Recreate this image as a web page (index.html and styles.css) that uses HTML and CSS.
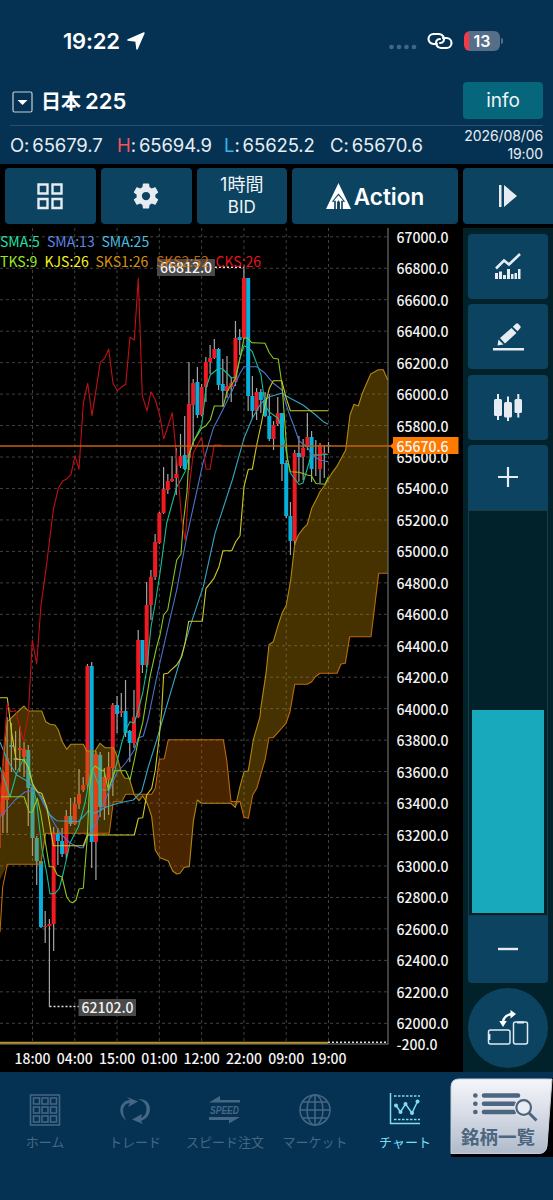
FILE: index.html
```html
<!DOCTYPE html>
<html lang="ja">
<head>
    <meta charset="UTF-8">
    <meta name="viewport" content="width=device-width, initial-scale=1.0">
    <title>日本225</title>
    <link rel="stylesheet" href="styles.css">
</head>
<body>
    <header>
        <div class="status">
            <div class="clock">19:22
                <svg width="18" height="18" viewBox="0 0 18 18"><path d="M17 1 10 17 9 9 1 8z" fill="#fff" stroke="#fff" stroke-width="1.5" stroke-linejoin="round"/></svg>
            </div>
            <div class="signals">
                <svg width="28" height="6" viewBox="0 0 28 6" fill="#44658a"><circle cx="2.5" cy="3" r="2.3"/><circle cx="10" cy="3" r="2.3"/><circle cx="17.500" cy="3" r="2.3"/><circle cx="25" cy="3" r="2.3"/></svg>
                <svg class="link" width="26" height="18" viewBox="0 0 26 18" fill="none" stroke="#fff" stroke-width="2.1" stroke-linecap="round"><path d="M10 12H6.500a5 5 0 0 1 0-10H12a5 5 0 0 1 4.500 7.200q-1 1.800-3.500 1.800"/><path d="M16 6h3.500a5 5 0 0 1 0 10H14a5 5 0 0 1-4.500-7.200q1-1.800 3.500-1.800"/></svg>
                <div class="battery">13</div>
            </div>
        </div>
        <div class="symbol">
            <svg width="21" height="22" viewBox="0 0 21 22"><rect x="1" y="1" width="19" height="20" rx="1.500" fill="none" stroke="#c3d0dc" stroke-width="1.200"/><path d="M5.500 9h10l-5 5z" fill="#fff"/></svg>
            <h1>日本<b>225</b></h1>
            <button class="info">info</button>
        </div>
        <div class="prices">
            <span class="o">O:<i>65679.7</i></span>
            <span class="h"><em>H</em>:<i>65694.9</i></span>
            <span class="l"><em>L</em>:<i>65625.2</i></span>
            <span class="c">C:<i>65670.6</i></span>
            <time>2026/08/06<br>19:00</time>
        </div>
    </header>

    <nav class="toolbar">
        <button>
            <svg width="26" height="27" viewBox="0 0 26 27" fill="none" stroke="#e6ecf2" stroke-width="2.400"><path d="M1.500 1.500h9v9h-9zM15.500 1.500h9v9h-9zM1.500 16h9v9h-9zM15.500 16h9v9h-9z"/></svg>
        </button>
        <button>
            <svg width="30" height="30" viewBox="0 0 24 24" fill="#e6ecf2"><path d="M19.430 12.980c.04-.32.07-.64.07-.98s-.03-.66-.07-.98l2.110-1.650c.19-.15.24-.42.12-.64l-2-3.460c-.12-.22-.39-.3-.61-.22l-2.490 1c-.52-.4-1.080-.73-1.690-.98l-.38-2.650C14.460 2.180 14.250 2 14 2h-4c-.25 0-.46.18-.49.42l-.38 2.650c-.61.25-1.170.59-1.690.98l-2.490-1c-.23-.09-.49 0-.61.22l-2 3.460c-.13.22-.07.49.12.64l2.110 1.650c-.04.32-.07.65-.07.98s.03.66.07.98l-2.110 1.650c-.19.15-.24.42-.12.64l2 3.460c.12.22.39.3.61.22l2.490-1c.52.4 1.080.73 1.690.98l.38 2.650c.03.24.24.42.49.42h4c.25 0 .46-.18.49-.42l.38-2.650c.61-.25 1.170-.59 1.690-.98l2.490 1c.23.09.49 0 .61-.22l2-3.460c.12-.22.07-.49-.12-.64zM12 15.300a3.300 3.300 0 1 1 0-6.600 3.300 3.300 0 0 1 0 6.600z"/></svg>
        </button>
        <button class="period"><span>1時間</span><span>BID</span></button>
        <button class="action">
            <svg width="25" height="26" viewBox="0 0 26 27"><path d="M13 0 26 27H17.500V19.500H20L13 11 6 19.500H8.500V27H0z" fill="#fff"/><path d="M13 12.800 18 18.500H15.800V27H14.500V20L13 18 11.500 20V27H10.200V18.500H8z" fill="#fff"/></svg>
            Action
        </button>
        <button class="play">
            <svg width="18" height="22" viewBox="0 0 18 22" fill="#e6ecf2"><path d="M0 0h2.500v22H0zM5 0l13 11L5 22z"/></svg>
        </button>
    </nav>

    <main>
        <svg class="chart" id="chart" width="463" height="844" viewBox="0 228 463 844">
            <g id="grid" class="grid"></g>
            <path class="axis" d="M388 228V1044H0"/>
            <path class="wick dots" d="M215 267.200h29M49.500 1006.500h30"/>
            <g class="tag"><rect x="157" y="259" width="58" height="17"/><text x="160" y="273">66812.0</text></g>
            <g class="tag"><rect x="78.500" y="999" width="57.500" height="17"/><text x="81.500" y="1013">62102.0</text></g>
            <g id="candles"></g>

            <!-- cloud -->
            <path class="kumo-up" d="M0 880 0 800 3.300 760 7.300 721.700 24 706 28.300 711H41.700L45.700 721.700 50 724.300 55 725 58.300 730 62.300 741.700 66.700 749.300 70.700 744.300H83.300L86.700 751H95L100 743.300 105 747.700H113.300L116.700 755 121.700 773.300 125 778.300H129.300L134.300 794.300H125.700L121.700 801.700H113.300L109.300 833.300H45.700L40.700 864.300H7.300z"/>
            <path class="kumo-up" d="M237 804 240 786.700 244 771.700 248.300 770.700 253.300 740 260 716.700 261 706.700 266 673.300 269 644.700 273.300 641.700 277.700 626.700 282 613.300 286.300 605 290.700 580 294.700 544.300 298.300 535 303.300 528.300 307.300 524.300 311.700 508.300 316 500 320 491.700 325 485 331.700 473.300 336.700 466.700 345.700 450 350 415 354 404.300 358.300 406 362.300 393.300 370.700 374 378.300 369.700H383.300L387.700 380V573.300H378.700L371 636.700H349.700L345.300 663.300 341 664 337 673.300H320L315.300 676.700 311.700 681.700 307.300 684.300H294.700L290 711.700 286 723.300 273.300 737.700H269L265 760 256.700 788.300 252.700 795 248.300 818.300 244 817.300 240 801.700z"/>
            <path class="kumo-down" d="M134.300 794.300H151.700L155.300 788.300 159.300 759.300 164.300 758.700 168.300 739.700H223.300L226.700 760 231 801.500H240L235.300 807.300 231 803.300H201.700L197.300 800 193.300 821.700 189.300 866.700 184.300 867.300 180 873.300 176.700 874 172.700 871 168.300 861 160 857.700 155.300 850 151.700 816.700 147.300 803.300 142.700 796 139 800.700z"/>
            <path class="sks1" d="M0 800 3.300 760 7.300 721.700 24 706 28.300 711H41.700L45.700 721.700 50 724.300 55 725 58.300 730 62.300 741.700 66.700 749.300 70.700 744.300H83.300L86.700 751H95L100 743.300 105 747.700H113.300L116.700 755 121.700 773.300 125 778.300H129.300L134.300 795 139 800.700 142.700 796 147.300 803.300 151.700 816.700 155.300 850 160 857.700 168.300 861 172.700 871 176.700 874 180 873.300 184.300 867.300 189.300 866.700 193.300 821.700 197.300 800 201.700 803.300H231L235.300 807.300 240 786.700 244 771.700 248.300 770.700 253.300 740 260 716.700 261 706.700 266 673.300 269 644.700 273.300 641.700 277.700 626.700 282 613.300 286.300 605 290.700 580 294.700 544.300 298.300 535 303.300 528.300 307.300 524.300 311.700 508.300 316 500 320 491.700 325 485 331.700 473.300 336.700 466.700 345.700 450 350 415 354 404.300 358.300 406 362.300 393.300 370.700 374 378.300 369.700H383.300L387.700 380"/>
            <path class="sks2" d="M0 932 2.700 887 7.300 864.300H40.700L45.700 833.300H109.300L113.300 801.700H121.700L125.700 794.300H151.700L155.300 788.300 159.300 759.300 164.300 758.700 168.300 739.700H223.300L226.700 760 231 801.500H240L244 817.300 248.300 818.300 252.700 795 256.700 788.300 265 760 269 737.700H273.300L286 723.300 290 711.700 294.700 684.300H307.300L311.700 681.700 315.300 676.700 320 673.300H337L341 664 345.300 663.300 349.700 636.700H371L378.700 573.300H387.700"/>

            <!-- moving averages -->
            <path class="sma5" d="M0 767 10 797 16.700 773 24 758 28.300 763 36.700 803 41.700 847 46.700 873 50 894 55 893.300 59.300 888.300 63.300 873 70 843 78.300 827 85 803 91.700 767 96.700 780 101.700 790H108.300L115 770 121.700 743 125.700 730 130 721.700 134.300 723 138.300 710 142.700 693 146.700 670 151 627 155.300 603 160 573 166.700 523 176.700 487 180.700 480 185 471.700 189 455 193.300 442 201.700 425 206 388 210.300 375 218.700 368 222.700 369 231.700 378 235.700 377 240 358 244 345.700 248.300 347.700 252.300 351.700 261 375 265 405 269.300 412 277.700 418 282 428 286.300 452 290.300 473 299 484.500 303 483 311.300 455H320L328.300 454.300"/>
            <path class="sma13" d="M0 817 15 800 25 792 36.700 790 48.300 813 60 833 70 843 80 847.700H83.300L87.300 837 96.700 823 101.700 808 116.700 773 125.700 763 134.300 750 138.300 738 143.300 736 148.300 718 156.700 677 166.700 633 176.700 590 186.700 537 203.300 461.700 213.300 428.300 222.700 410 231.700 391.700 240 373.300 244 366.700H256.700L265 373.300 273.300 383.300 282 390 286.300 405 290.300 416.700 294.700 428.300 299 441 307.300 446.700 311.700 455 320 460 328.300 461.700"/>
            <path class="sma25" d="M0 742 7.300 760 16.700 775 28.300 781.700 41.700 797 50 815 56.700 820.700 78.300 821.700 85 815 88.300 810.700 95 813.300 106.700 806.700 120 802.700 133.300 800 141.700 791.700 148.300 767 156.700 740 190 626.700 203.300 586.700 215 533.300 232.300 480 244 438.300 252.300 418.300 261 403.300 269.300 396.700 281.700 393.300 290.300 398.300 303 405 315.700 415 323.300 421.700 328.300 424.300"/>
            <path class="tks" d="M0 796.700H24L29.300 812.300H32.300L37.300 798.300 40.700 813 49.300 866.700H53.300L57.300 875 62 877 66.700 896.700 70 901.700 72.700 902.700 76 900 79 889 83.300 888.300 87.300 837 89.300 790 92 770 95 766 101.700 770.700 104 770 108.300 790 115 770.700H125.700L130 780 135 757 138.300 740 142.700 722.700 150 676.700 156.700 646.700 160 635 163.700 615 167.700 610 176.700 560 181 554 183.300 523 187 492 189 455 193.300 441.700 201.700 428.300 206 425.700 210.300 420 214.300 406H223.300L227 391.700 235.700 378.300 240 358 244 338.300 246.700 337.700 251.700 342.700 265 343.300 269.300 352.700 273.300 358.300 278.300 359 282 385 285 425 287.300 458.300 290.300 471.700 299 472.300 307.300 475 311.300 475.700 316 483.500 325 484.300 328.300 477"/>
            <path class="kjs" d="M0 697.700H7.300L11.700 733.300 16 759 24 760 28.300 767.300 32.300 783.300 37.300 791.700 41.700 793.300 46.700 806.700 53.300 845.700H83.300L87.300 835H134.300L138.300 818.300 142.700 817.700 146.700 795 151.700 788.300 155.300 770 159.300 736 161.700 710 163.700 674 167.700 673.300 171.700 669.300 176.700 665 181.700 656.700 185 643.300 188.700 621.300H202.300L206 588.300 214 578.300 219 566.700 223 550.700H231.700L235.700 541.700 240 535.700 244 486.700 248.300 469.300H252.300L256.700 445 261 425 265 405 269.300 388.300 273.300 380.700H281.700L286.300 398.300 290.300 410.700H328.300"/>
            <path class="cks" d="M0 803 4 745 7.300 704 11 711.700 15.700 710.700 23.300 741 28.300 715 32.300 640 36.700 664 41 605 45.700 571.700 53.300 510 58.300 488.300 62.700 481 66.700 479 71 474.300 75 455.700 79 469.300 83.300 403.300 87.700 383.300 92 415.700 100.300 362.300 104.700 358.300 108.700 349 113 383.300 117.300 390.700 121.300 387.300 125.700 384.300 130 337.300 134.300 340 138.300 278.300 142.300 395.700 147 411 151 391.700 155.300 400 159.700 415 163.700 439 172.300 412.700 176.700 458.300 181.700 520 185.300 540.700 188 498 193.300 453 201.700 437.300 206 469.300H210L214.300 445H221.700"/>

            <path class="now" d="M0 446H393"/>
            <path class="sub" d="M0 1042.800H328"/>
            <path class="dots" d="M328 1042.300H388"/>

            <g class="legend">
                <text x="0" y="246.500" fill="#1fe0a4">SMA:5</text>
                <text x="47" y="246.500" fill="#5a86e6">SMA:13</text>
                <text x="101.500" y="246.500" fill="#45bfe0">SMA:25</text>
                <text x="0" y="266.500" fill="#9be822">TKS:9</text>
                <text x="44.500" y="266.500" fill="#f7f419">KJS:26</text>
                <text x="95.500" y="266.500" fill="#d9920f">SKS1:26</text>
                <text x="156" y="266.500" fill="#e07a0c" opacity=".85">SKS2:52</text>
                <text x="215.500" y="266.500" fill="#e8151b">CKS:26</text>
            </g>
            <g id="levels" class="label"></g>
            <text class="label" x="396.500" y="1049.500">-200.0</text>
            <g id="hours" class="label hours"></g>
            <path d="M390 446l3-3v-6h65.500v17H393v-5z" fill="#ff7b00"/>
            <text class="label" x="396.500" y="451.500">65670.6</text>
        </svg>

        <aside>
            <button>
                <svg width="28" height="27" viewBox="0 0 28 27" fill="#e6ecf2"><path d="M2 15.500 10 7.500l5 4L26 1" fill="none" stroke="#e6ecf2" stroke-width="2.600"/><path d="M1 20h3v6H1zM5 18.500h3V26H5zM9 22h3v4H9zM13 16h3v10h-3zM17 21h2.500v5H17zM20.500 20h2.500v6h-2.500zM24 16h2.500v10H24z"/></svg>
            </button>
            <button>
                <svg width="31" height="28" viewBox="0 0 31 28" fill="#e6ecf2"><path d="M0 25h31v2.600H0zM4.500 22.500l1-6 5 5zM7 15 18.500 5l5 5L12 20.500zM19.800 3.800 23 .8q1-1 2.200 0l2 2.200q1 1 0 2.200L24.500 8.200z"/></svg>
            </button>
            <button>
                <svg width="28" height="27" viewBox="0 0 28 27" fill="#e6ecf2"><rect y="5" width="8" height="17" rx="1.500"/><rect x="10" y="8" width="8" height="15.500" rx="1.500"/><rect x="20.500" y="5" width="7.500" height="14" rx="1.500"/><path d="M3 0h2v26H3zM13 2.500h2V27h-2zM23.300 0h2v23.500h-2z"/></svg>
            </button>
            <div class="zoomer">
                <button><svg width="20" height="20" viewBox="0 0 20 20"><path d="M0 10h20M10 0v20" stroke="#e6ecf2" stroke-width="2.200"/></svg></button>
                <div class="track"><div class="thumb"></div></div>
                <button><svg width="20" height="20" viewBox="0 0 20 20"><path d="M0 10h20" stroke="#e6ecf2" stroke-width="2.400"/></svg></button>
            </div>
            <button class="rotate">
                <svg width="42" height="36" viewBox="0 0 42 36" fill="none" stroke="#dfeaf2" stroke-width="1.500"><rect x="1.500" y="20" width="21.500" height="14" rx="2"/><rect x="26.500" y="12" width="14" height="22" rx="2"/><path d="M30 12.500h7M2.300 24v6" stroke-width="2.200"/><path d="M16 12q1-7 9-8" stroke="#fff" stroke-width="2.400"/><path d="M23.500 0l5.500 4-5.500 4.500zM12.300 11h7.500L16 17z" fill="#fff" stroke="none"/></svg>
            </button>
        </aside>
    </main>

    <footer>
        <a>
            <svg width="32" height="34" viewBox="0 0 32 34" fill="none" stroke="#466784" stroke-width="1.500"><path d="M1.500 2h29v30h-29z"/><path d="M4.500 5h6v6h-6zM13 5h6v6h-6zM21.500 5h6v6h-6zM4.500 14h6v6h-6zM13 14h6v6h-6zM21.500 14h6v6h-6zM4.500 23h6v6h-6zM13 23h6v6h-6zM21.500 23h6v6h-6z"/></svg>
            ホーム
        </a>
        <a>
            <svg width="32" height="34" viewBox="0 0 32 34" fill="#466784"><path d="M8 28Q-1 22 2 13 5 7 11 7L8 4l11 4.500L9 14l2-4Q5 10 4 17q0 7 4 11zM19 6q12 0 12 11-1 8-9 11l2 3-11-4.500L23 21l-1 4q5-2 5.500-8Q28 9 19 6z"/></svg>
            トレード
        </a>
        <a>
            <svg width="32" height="34" viewBox="0 0 32 34" fill="#466784"><path d="M0 9.500 11 3v4h20v2.500zM31 24 20 30.500V27H0v-3z"/><text x="1" y="20.500" textLength="29" lengthAdjust="spacingAndGlyphs" class="speed">SPEED</text></svg>
            スピード注文
        </a>
        <a>
            <svg width="32" height="34" viewBox="0 0 32 34" fill="none" stroke="#466784" stroke-width="1.500"><circle cx="16" cy="17" r="15"/><ellipse cx="16" cy="17" rx="8" ry="15"/><path d="M16 2v30M1 17h30M4 9h24M4 25h24"/></svg>
            マーケット
        </a>
        <a class="active">
            <svg width="32" height="34" viewBox="0 0 32 34" fill="none" stroke="#7edcf3" stroke-width="1.500"><path d="M1.500 0v30.500H31"/><path d="M5 3h26M5 26.500h26" stroke-dasharray="2.500 1.500"/><path d="M7 12.500 11.500 19l5-8 6.500 9L28.500 8.500"/><g fill="#7edcf3" stroke="none"><circle cx="7" cy="12.500" r="2"/><circle cx="11.500" cy="19" r="2"/><circle cx="16.500" cy="11" r="2"/><circle cx="23" cy="20" r="2"/><circle cx="28.500" cy="8.500" r="2"/></g></svg>
            チャート
        </a>
        <div class="list-wrap">
            <svg class="shape" width="103" height="79" viewBox="0 0 103 79">
                <defs><linearGradient id="silver" x2="0" y2="1"><stop offset="0" stop-color="#f5f6fa"/><stop offset=".5" stop-color="#d5dae4"/><stop offset="1" stop-color="#aebaca"/></linearGradient></defs>
                <path d="M98 0h5v79H1V70z" fill="#000"/>
                <path d="M1 75.500V9q0-8 8-8H102L97 68q-1 7.500-8 7.500z" fill="url(#silver)" stroke="#c5cfdb" stroke-width="1"/>
                <g stroke="#4c6680" stroke-width="4.600" stroke-linecap="round" fill="none"><path d="M34 17.500H68M34 25.700H64M34 34H64"/><path d="M25.300 17.500h.1M25.300 25.700h.1M25.300 34h.1"/></g>
                <circle cx="73.700" cy="29.500" r="9.500" fill="#e2e6ee"/><circle cx="73.700" cy="29.500" r="7.300" fill="#e9ecf2" stroke="#4c6680" stroke-width="2.200"/><path d="M79 35l7.500 7.500" stroke="#4c6680" stroke-width="3"/>
            </svg>
            <span>銘柄一覧</span>
        </div>
    </footer>
    <script src="script.js"></script>
</body>
</html>
```
FILE: styles.css
```css
*{
    margin: 0;
    padding: 0;
    box-sizing: border-box;
}
body{
    width: 553px;
    height: 1200px;
    display: flex;
    flex-direction: column;
    background-color: #053253;
    color: #fff;
    font-family: Inter, "Noto Sans CJK JP", sans-serif;
    overflow: hidden;
}
button{
    border: none;
    color: #eef3f7;
    font-family: inherit;
    background-color: #0b4361;
    border-radius: 4px;
    display: flex;
    align-items: center;
    justify-content: center;
}
header{
    height: 164px;
    padding: 0 10px;
}
.status{
    height: 82px;
    padding: 0 39px 0 53px;
    display: flex;
    align-items: center;
    justify-content: space-between;
}
.clock{
    display: flex;
    align-items: center;
    gap: 7px;
    font-size: 22px;
    font-weight: 600;
    letter-spacing: -0.2px;
}
.signals{
    display: flex;
    align-items: center;
    gap: 10px;
}
.signals svg:first-child{
    margin-top: 11px;
}
.signals .link{
    margin-right: 1px;
}
.battery{
    position: relative;
    width: 36px;
    height: 20px;
    margin-right: 4px;
    border-radius: 6px;
    font-size: 16px;
    font-weight: 600;
    line-height: 20px;
    text-align: center;
    background: linear-gradient(90deg, #f33b47 5px, #566f88 5px);
}
.battery::after{
    content: "";
    position: absolute;
    right: -3px;
    top: 7px;
    width: 2px;
    height: 6px;
    border-radius: 0 2px 2px 0;
    background-color: #566f88;
}
.symbol{
    height: 44px;
    display: flex;
    align-items: center;
    gap: 8px;
    padding: 0 0 6px 2px;
    border-bottom: 1px solid #2a4f6e;
}
.symbol svg{
    margin-top: 2px;
}
h1{
    font-size: 20px;
    font-weight: 700;
    line-height: 30px;
    margin-top: 2px;
}
h1 b{
    margin-left: 4px;
    font-size: 22px;
    font-weight: 600;
}
.info{
    width: 80px;
    height: 37px;
    margin-left: auto;
    background-color: #05667c;
    font-size: 19px;
}
.prices{
    display: grid;
    grid-template-columns: 107px 107px 106px 110px 1fr;
    align-items: center;
    height: 38px;
    font-size: 18.500px;
    font-weight: 400;
    letter-spacing: -0.1px;
    color: #e8eef4;
}
.prices i{
    font-style: normal;
    margin-left: 3px;
}
.prices em{
    font-style: normal;
    color: #f2545b;
}
.prices .l em{
    color: #35b6e6;
}
time{
    text-align: right;
    font-size: 14px;
    line-height: 18px;
    white-space: nowrap;
    justify-self: end;
}
.toolbar{
    height: 64px;
    display: grid;
    grid-template-columns: 90.500px 91px 90.500px 166px 90px;
    gap: 5px;
    padding: 4px 0 4px 5px;
    background-color: #000;
}
.toolbar .period{
    flex-direction: column;
    font-size: 17px;
    line-height: 22px;
}
.period span:first-child{
    font-size: 18px;
}
.toolbar .action{
    font-size: 22.500px;
    font-weight: 600;
    color: #fff;
    gap: 3px;
}
.toolbar .play{
    border-radius: 4px 0 0 4px;
}
main{
    display: flex;
    height: 844px;
    background-color: #000;
}
.chart{
    display: block;
    font-family: "Noto Sans CJK JP", sans-serif;
    font-size: 14px;
    font-weight: 500;
}
.chart path{
    fill: none;
}
.chart path[fill]{
    fill: #ff7b00;
}
.grid line{
    stroke: #414141;
    stroke-dasharray: 3 3;
}
.chart .axis{
    stroke: #555;
    stroke-width: 1.5;
}
.wick{
    stroke: #a6a6a6;
    stroke-width: 1.2;
}
.chart .dots{
    stroke: #ddd;
    stroke-width: 1.5;
    stroke-dasharray: 2 2;
}
.up{
    fill: #f01a22;
}
.down{
    fill: #05b0dc;
}
.tag rect{
    fill: #4a4a4a;
}
.tag text, .label{
    fill: #f4f4f4;
}
.legend{
    font-weight: 400;
}
.hours{
    text-anchor: middle;
}
.chart .kumo-up{
    fill: rgba(200, 140, 0, .35);
}
.chart .kumo-down{
    fill: rgba(205, 103, 0, .35);
}
.sks1, .sks2, .sma5, .sma13, .sma25, .tks, .kjs, .cks{
    stroke-width: 1.1;
    stroke-linejoin: round;
}
.sks1{ stroke: #b08a10; }
.sks2{ stroke: #bd6a0c; }
.sma5{ stroke: #18bd92; }
.sma13{ stroke: #4b74cf; }
.sma25{ stroke: #35a6c2; }
.tks{ stroke: #8ac820; }
.kjs{ stroke: #cfcb22; }
.cks{ stroke: #c21017; }
.now{
    stroke: #c4620c;
    stroke-width: 1.5;
}
.sub{
    stroke: #b5922a;
    stroke-width: 2;
}
aside{
    flex: 1;
    display: flex;
    flex-direction: column;
    gap: 5.3px;
    padding: 6px 5px 0;
    background-color: #02222b;
}
aside button{
    width: 80px;
    height: 65px;
    flex: none;
}
.zoomer{
    height: 538px;
    display: flex;
    flex-direction: column;
}
.zoomer button:first-child{
    border-radius: 4px 4px 0 0;
}
.zoomer button:last-child{
    height: 67px;
    border-radius: 0 0 4px 4px;
}
.track{
    flex: 1;
    display: flex;
    align-items: flex-end;
    padding: 0 3px 2px;
    border: 1px solid #1c3a42;
}
.thumb{
    width: 100%;
    height: 203px;
    background-color: #19a9bd;
}
aside .rotate{
    height: 80px;
    border-radius: 50%;
}
footer{
    flex: 1;
    display: grid;
    grid-template-columns: repeat(5, 90px) 103px;
    align-items: start;
    padding-top: 6px;
}
footer a{
    display: flex;
    flex-direction: column;
    align-items: center;
    gap: 5px;
    padding-top: 15px;
    font-size: 13px;
    line-height: 20px;
    color: #466784;
    white-space: nowrap;
}
footer .active{
    color: #7edcf3;
}
.speed{
    font-family: "Liberation Sans", sans-serif;
    font-size: 10px;
    font-weight: 700;
    font-style: italic;
}
.list-wrap{
    display: grid;
}
.list-wrap > *{
    grid-area: 1 / 1;
}
.list-wrap span{
    align-self: end;
    padding: 0 0 7px 11px;
    font-size: 18.500px;
    font-weight: 700;
    line-height: 25px;
    color: #4c6680;
}
```
FILE: script.js
```js
// wick top, body top, body bottom, wick bottom, 1 = up / 0 = down
let candles = [
    [790,800,848,850,1],[770,772,815,833,1],[717,758,800,833,1],[723,745,747,772,0],[731,758,760,770,0],[726,748,750,772,1],
    [742,749,757,777,1],[745,750,788,826,0],[785,787,838,856,0],[836,838,861,885,0],[861,861,927,928,0],[911,926,927,943,1],
    [919,924,926,1007,1],[827,833,924,951,1],[828,833,841,865,0],[828,841,854,857,0],[810,816,854,859,1],[798,816,824,826,0],
    [797,804,824,825,1],[769,794,804,809,1],[777,785,790,792,1],[664,666,785,789,1],[662,666,842,868,0],[751,754,842,880,1],
    [752,755,807,817,0],[768,777,807,820,1],[752,767,780,815,1],[703,705,768,796,1],[696,705,714,733,0],[693,711,713,717,1],
    [680,711,733,737,0],[730,731,743,762,0],[690,717,743,748,1],[630,640,717,718,1],[640,640,665,673,0],[582,605,665,667,1],
    [570,577,605,620,1],[534,542,577,580,1],[512,513,543,544,1],[467,489,513,514,1],[474,481,490,494,1],[456,479,481,482,1],
    [448,474,478,495,1],[434,456,466,468,1],[416,455,469,470,0],[362,404,458,470,1],[379,383,405,446,1],[367,382,415,418,0],
    [384,387,415,416,1],[357,362,387,402,1],[345,358,362,374,1],[339,349,358,359,1],[348,349,385,390,0],[359,384,391,407,0],
    [356,386,391,398,1],[377,383,387,402,1],[321,338,382,386,1],[329,337,340,355,0],[267,278,338,339,1],[278,278,396,411,0],
    [376,396,411,418,0],[388,392,411,420,1],[389,392,400,413,0],[392,400,416,417,0],[394,416,439,441,0],[421,425,439,450,1],
    [397,413,424,426,1],[413,413,464,481,0],[460,463,516,518,0],[502,516,541,555,0],[450,453,541,545,1],[436,453,457,482,0],
    [439,448,457,480,1],[413,437,447,450,1],[431,437,469,482,0],[440,454,456,476,1],[443,445,469,483,1],[445,453,454,478,1],
    [442,445,446,453,0]
]
let step = 4.2286

function add(parent, tag, attrs, text){
    let el = document.createElementNS("http://www.w3.org/2000/svg", tag)
    for(let k in attrs) el.setAttribute(k, attrs[k])
    if(text) el.textContent = text
    document.getElementById(parent).appendChild(el)
}

candles.forEach((c, i) => {
    let x = 32.5 + (i - 8) * step
    add("candles", "line", {class: "wick", x1: x, x2: x, y1: c[0], y2: c[3]})
    add("candles", "rect", {class: c[4] ? "up" : "down", x: x - 2, y: c[1], width: 4, height: c[2] - c[1]})
})

for(let i = 0; i <= 25; i++){
    let y = 236.8 + i * 31.46
    add("grid", "line", {x1: 0, x2: 388, y1: y, y2: y})
    add("levels", "text", {x: 396.5, y: y + 6}, (67000 - i * 200) + ".0")
}

let hours = ["18:00", "04:00", "15:00", "01:00", "12:00", "22:00", "09:00", "19:00"]
hours.forEach((h, i) => {
    let x = 32.5 + i * 42.286
    add("grid", "line", {x1: x, x2: x, y1: 228, y2: 1042})
    add("hours", "text", {x: x, y: 1064}, h)
})
```
